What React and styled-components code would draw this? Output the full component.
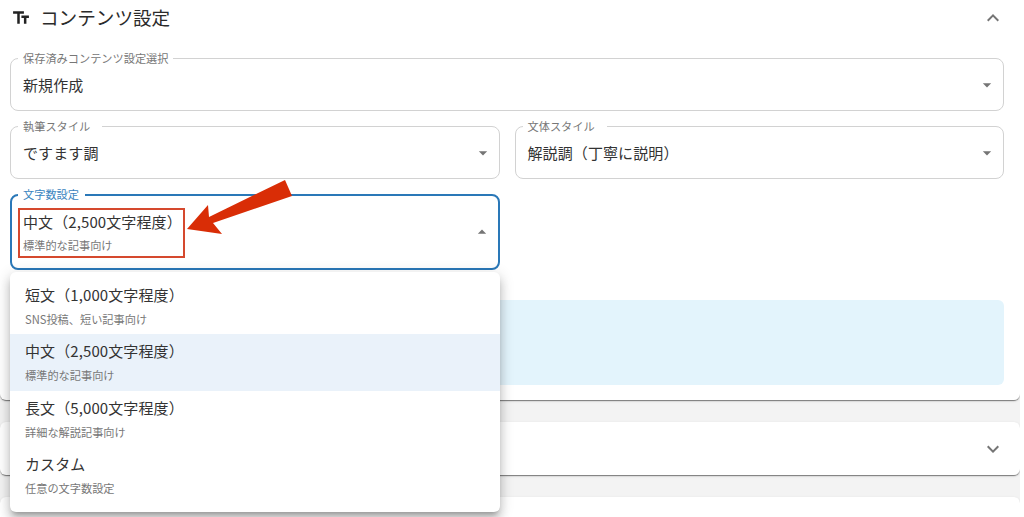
import React from 'react'
import styled, { createGlobalStyle } from 'styled-components'

const GlobalStyle = createGlobalStyle`
  html, body {
    margin: 0;
    padding: 0;
    background: #fff;
    height: 517px;
    overflow: hidden;
    font-family: "Noto Sans CJK JP", "Noto Sans", sans-serif;
  }
`

const Page = styled.div`
  width: 1020px;
  height: 517px;
  background: #f3f3f3;
  display: flex;
  flex-direction: column;
  gap: 22px;
  overflow: hidden;
`

const Panel = styled.section`
  background: #fff;
  padding: 0 16px 15px 10px;
  border-radius: 0 0 6px 6px;
  box-shadow: 0 2px 1px -1px rgba(0, 0, 0, 0.3), 0 1px 1px rgba(0, 0, 0, 0.2), 0 1px 3px rgba(0, 0, 0, 0.12);
`

const PanelHeader = styled.header`
  height: 35px;
  margin: 0 -1px 23px 1px;
  display: flex;
  align-items: center;
  justify-content: space-between;
`

const Title = styled.h2`
  margin: 0;
  display: flex;
  align-items: center;
  gap: 9px;
  font-size: 18.6px;
  font-weight: 400;
  line-height: 1;
  color: #2b2b2b;
`

const Form = styled.div`
  display: grid;
  grid-template-columns: 1fr 1fr;
  gap: 15px;
`

const Field = styled.div`
  position: relative;
  grid-column: ${p => (p.$wide ? '1 / -1' : 'auto')};
  height: ${p => (p.$tall ? '76px' : '53px')};
  box-sizing: border-box;
  padding: 0 6px 0 ${p => (p.$focused ? '11px' : '12px')};
  display: flex;
  align-items: center;
  justify-content: space-between;
  background: #fff;
  border: ${p => (p.$focused ? '2px solid #2a78b8' : '1px solid #d2d2d2')};
  border-radius: 8px;
`

const FieldLabel = styled.label`
  position: absolute;
  top: ${p => (p.$focused ? '-9px' : '-8px')};
  left: ${p => (p.$focused ? '6px' : '7px')};
  padding: 0 ${p => p.$gap}px 0 5px;
  background: #fff;
  font-size: 11.2px;
  line-height: 15px;
  color: ${p => (p.$focused ? '#3a84c0' : '#777')};
`

const ValueStack = styled.div`
  display: flex;
  flex-direction: column;
  gap: 6px;
  padding-top: 1px;
`

const Value = styled.span`
  font-size: 15px;
  line-height: 18px;
  letter-spacing: 0.1px;
  color: #333;
`

const SubValue = styled.span`
  font-size: 11.2px;
  line-height: 16px;
  color: #777;
`

const Highlight = styled.div`
  position: absolute;
  top: 12px;
  left: 6px;
  width: 167px;
  height: 50px;
  box-sizing: border-box;
  border: 2px solid #d5492e;
`

const Pointer = styled.svg`
  position: absolute;
  top: -16px;
  left: 175px;
  width: 107px;
  height: 62px;
  z-index: 3;
`

const Menu = styled.ul`
  position: absolute;
  top: 76px;
  left: -2px;
  width: 490px;
  height: 240px;
  box-sizing: border-box;
  margin: 0;
  padding: 6px 0 9px;
  list-style: none;
  background: #fff;
  border-radius: 6px;
  z-index: 2;
  box-shadow: 0 5px 5px -3px rgba(0, 0, 0, 0.25), 0 8px 10px 1px rgba(0, 0, 0, 0.14), 0 3px 14px 2px rgba(0, 0, 0, 0.12);
`

const MenuItem = styled.li`
  height: 56.4px;
  box-sizing: border-box;
  padding: 8px 15px 0;
  display: flex;
  flex-direction: column;
  gap: 7px;
  background: ${p => (p.$selected ? '#eaf2fa' : 'transparent')};
`

const InfoBox = styled.div`
  height: 85px;
  margin-top: 30px;
  background: #e3f4fc;
  border-radius: 6px;
`

const Collapsed = styled.div`
  height: 53px;
  flex-shrink: 0;
  box-sizing: border-box;
  padding: 0 15px;
  display: flex;
  align-items: center;
  justify-content: flex-end;
  background: #fff;
  border-radius: 6px;
  box-shadow: 0 2px 1px -1px rgba(0, 0, 0, 0.3), 0 1px 1px rgba(0, 0, 0, 0.2), 0 1px 3px rgba(0, 0, 0, 0.12);
`

const Glyph = styled.svg`
  display: block;
  flex-shrink: 0;
  width: ${p => p.$size || 24}px;
  height: ${p => p.$size || 24}px;
  fill: ${p => p.$color || '#757575'};
`

const ICONS = {
  text: 'M2.5 4v3h5v12h3V7h5V4h-13zm19 5h-9v3h3v7h3v-7h3V9z',
  less: 'm12 8-6 6 1.41 1.41L12 10.83l4.59 4.58L18 14z',
  more: 'M16.59 8.59 12 13.17 7.41 8.59 6 10l6 6 6-6z',
  down: 'M7 10l5 5 5-5z',
  up: 'M7 14l5-5 5 5z',
}

const Icon = ({ name, size, color }) => (
  <Glyph viewBox="0 0 24 24" $size={size} $color={color}>
    <path d={ICONS[name]} />
  </Glyph>
)

const OPTIONS = [
  { label: '短文（1,000文字程度）', note: 'SNS投稿、短い記事向け' },
  { label: '中文（2,500文字程度）', note: '標準的な記事向け', selected: true },
  { label: '長文（5,000文字程度）', note: '詳細な解説記事向け' },
  { label: 'カスタム', note: '任意の文字数設定' },
]

export default function App() {
  return (
    <>
      <GlobalStyle />
      <Page>
        <Panel>
          <PanelHeader>
            <Title>
              <Icon name="text" size={20} color="#222" />
              コンテンツ設定
            </Title>
            <Icon name="less" />
          </PanelHeader>
          <Form>
            <Field $wide>
              <FieldLabel $gap={5}>保存済みコンテンツ設定選択</FieldLabel>
              <Value>新規作成</Value>
              <Icon name="down" size={20} />
            </Field>
            <Field>
              <FieldLabel $gap={12}>執筆スタイル</FieldLabel>
              <Value>ですます調</Value>
              <Icon name="down" size={20} />
            </Field>
            <Field>
              <FieldLabel $gap={12}>文体スタイル</FieldLabel>
              <Value>解説調（丁寧に説明）</Value>
              <Icon name="down" size={20} />
            </Field>
            <Field $tall $focused>
              <FieldLabel $focused $gap={6}>文字数設定</FieldLabel>
              <ValueStack>
                <Value>中文（2,500文字程度）</Value>
                <SubValue>標準的な記事向け</SubValue>
              </ValueStack>
              <Icon name="up" size={20} />
              <Highlight />
              <Pointer viewBox="0 0 107 62">
                <polygon points="0,49 21,25 22,37 98,0 105,16 26,43 35,54" fill="#d92d06" />
              </Pointer>
              <Menu>
                {OPTIONS.map(option => (
                  <MenuItem key={option.label} $selected={option.selected}>
                    <Value>{option.label}</Value>
                    <SubValue>{option.note}</SubValue>
                  </MenuItem>
                ))}
              </Menu>
            </Field>
          </Form>
          <InfoBox />
        </Panel>
        <Collapsed>
          <Icon name="more" />
        </Collapsed>
        <Collapsed />
      </Page>
    </>
  )
}
